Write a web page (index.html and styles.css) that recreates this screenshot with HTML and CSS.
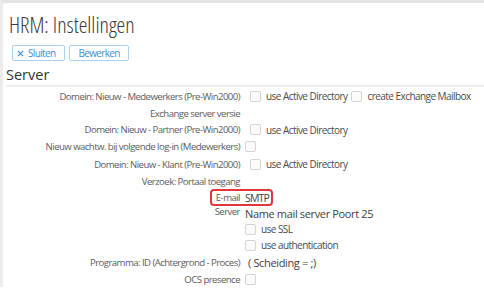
FILE: index.html
```html
<!DOCTYPE html>
<html>
<head>
<meta charset="utf-8">
<link rel="stylesheet" href="styles.css">
</head>
<body>
<div class="frame">
  <h1 class="title">HRM: Instellingen</h1>
  <div class="toolbar">
    <button class="btn btn-close"><svg class="x" viewBox="0 0 8 8" width="7" height="7"><path d="M1 1L7 7M7 1L1 7" stroke="#3b8fd0" stroke-width="1.3" fill="none"/></svg>Sluiten</button>
    <button class="btn">Bewerken</button>
  </div>
  <h2 class="section">Server</h2>
  <div class="form">
    <div class="lbl">Domein: Nieuw - Medewerkers (Pre-Win2000)</div>
    <div class="val"><span class="cb ml"></span><span class="cbt">use Active Directory</span><span class="cb"></span><span class="cbt">create Exchange Mailbox</span></div>

    <div class="lbl">Exchange server versie</div>
    <div class="val"></div>

    <div class="lbl">Domein: Nieuw - Partner (Pre-Win2000)</div>
    <div class="val"><span class="cb ml"></span><span class="cbt">use Active Directory</span></div>

    <div class="lbl">Nieuw wachtw. bij volgende log-in (Medewerkers)</div>
    <div class="val"><span class="cb"></span></div>

    <div class="lbl">Domein: Nieuw - Klant (Pre-Win2000)</div>
    <div class="val"><span class="cb ml"></span><span class="cbt">use Active Directory</span></div>

    <div class="lbl">Verzoek: Portaal toegang</div>
    <div class="val"></div>

    <div class="lbl">E-mail</div>
    <div class="val dark smtp">SMTP</div>

    <div class="lbl top">Server</div>
    <div class="val stack">
      <div class="line dark">Name mail server Poort 25</div>
      <div class="line"><span class="cb"></span><span class="cbt2">use SSL</span></div>
      <div class="line"><span class="cb"></span><span class="cbt2">use authentication</span></div>
    </div>

    <div class="lbl">Programma: ID (Achtergrond - Proces)</div>
    <div class="val dark sep">( Scheiding = ;)</div>

    <div class="lbl">OCS presence</div>
    <div class="val"><span class="cb"></span></div>
  </div>
  <div class="mark"></div>
</div>
</body>
</html>
```

FILE: styles.css
```css
html, body {
  margin: 0;
  padding: 0;
  background: #ffffff;
}
body {
  font-family: "Open Sans", "DejaVu Sans", sans-serif;
  width: 484px;
  height: 290px;
  overflow: hidden;
}
.frame {
  position: relative;
  border-top: 3px solid #e4e4e4;
  border-left: 3px solid #ececec;
  height: 287px;
  box-sizing: border-box;
}
.title {
  margin: 0;
  padding: 6px 0 0 6px;
  font-size: 22px;
  font-weight: 300;
  font-stretch: 77%;
  line-height: 30px;
  color: #3a3a3a;
}
.toolbar {
  display: flex;
  gap: 4px;
  margin: 6px 0 0 9px;
}
.btn {
  display: flex;
  align-items: center;
  gap: 4px;
  height: 16px;
  padding: 0 8px;
  border: 1px solid #a9d1ef;
  border-radius: 2px;
  background: #ffffff;
  color: #3b8fd0;
  font-family: "Open Sans", "DejaVu Sans", sans-serif;
  font-size: 10px;
  letter-spacing: -0.65px;
  line-height: 14px;
}
.btn-close {
  padding: 0 9px 0 4px;
}
.btn .x {
  display: block;
}
.section {
  margin: 5px 0 0 3px;
  padding: 0 0 2px 0;
  font-size: 14.5px;
  font-weight: 400;
  line-height: 17px;
  color: #333333;
  border-bottom: 2px solid #eeeeee;
}
.form {
  display: grid;
  grid-template-columns: 234px 1fr;
  grid-template-rows: 18px 17px 15px 18px 18px 17px 15px 48px 18px 16px;
  column-gap: 5px;
  margin-left: 3px;
  font-size: 9.6px;
  letter-spacing: -0.55px;
  color: #5c5c5c;
}
.lbl {
  display: flex;
  align-items: center;
  justify-content: flex-end;
  white-space: nowrap;
}
.lbl.top {
  align-items: flex-start;
  height: 16px;
}
.val {
  display: flex;
  align-items: center;
  white-space: nowrap;
  color: #4a4a4a;
  font-size: 10px;
  letter-spacing: -0.55px;
}
.dark {
  color: #404040;
  font-size: 11px;
  letter-spacing: -0.35px;
}
.smtp {
  font-size: 10.5px;
  letter-spacing: -0.8px;
}
.sep {
  padding-left: 3px;
}
.stack {
  flex-direction: column;
  align-items: stretch;
}
.line {
  display: flex;
  align-items: center;
  height: 16px;
}
.line.dark {
  letter-spacing: -0.35px;
}
.cb {
  display: inline-block;
  width: 9px;
  height: 9px;
  border: 1px solid #d4d4d4;
  border-radius: 2px;
  background: #fbfbfb;
  flex: none;
}
.cb.ml {
  margin-left: 5px;
}
.cbt {
  margin: 0 4px 0 5px;
}
.cbt2 {
  margin-left: 5px;
}
.mark {
  position: absolute;
  left: 207px;
  top: 186px;
  width: 59px;
  height: 13px;
  border: 2px solid #e3363c;
  border-radius: 4px;
}
```
